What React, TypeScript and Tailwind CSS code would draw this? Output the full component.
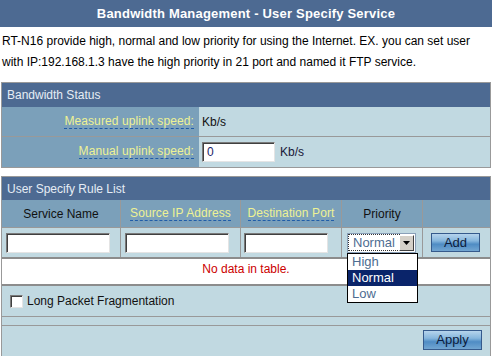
const label = 'inline-block leading-[13px] text-[#eef294] border-b border-dashed border-[#1f5ca8] tracking-[0.1px]';
const inset =
  'h-[20px] bg-white border border-t-[#7a7a7a] border-l-[#7a7a7a] border-b-[#e4e4e4] border-r-[#e4e4e4] shadow-[inset_1px_1px_0_#404040]';
const btn =
  'flex items-center justify-center h-[19px] border border-[#355a8c] text-[13px] text-[#0c1c3c] bg-[linear-gradient(#b6d4ec,#86b6dd_40%,#4f8cc4_60%,#72a6d2)]';

export default function App() {
  return (
    <div className="w-[492px] h-[357px] overflow-hidden bg-white text-[12px] text-black font-['Liberation_Sans',Arial,sans-serif]">
      {/* title */}
      <div className="h-[27px] bg-[#4d6a92] flex items-center justify-center text-white font-bold text-[13px] tracking-[0.2px]">
        Bandwidth Management - User Specify Service
      </div>

      <div className="px-[2px] pt-[4px] leading-[21px]">
        <p>RT-N16 provide high, normal and low priority for using the Internet. EX. you can set user</p>
        <p>with IP:192.168.1.3 have the high priority in 21 port and named it FTP service.</p>
      </div>

      {/* Bandwidth Status */}
      <div className="mt-[9px] ml-px w-[490px] border border-[#999]">
        <div className="h-[24px] bg-[#4d6a92] flex items-center pl-[5px] text-[#e6edf5]">Bandwidth Status</div>
        <div className="flex h-[30px] border-b border-[#999]">
          <div className="w-[197px] bg-[#7ba0ba] flex items-center justify-end pr-[5px]">
            <span className={label}>Measured uplink speed:</span>
          </div>
          <div className="flex-1 bg-[#c1d9e1] flex items-center pl-[3px] text-[#111]">Kb/s</div>
        </div>
        <div className="flex h-[30px]">
          <div className="w-[197px] bg-[#7ba0ba] flex items-center justify-end pr-[5px]">
            <span className={label}>Manual uplink speed:</span>
          </div>
          <div className="flex-1 bg-[#c1d9e1] flex items-center pl-[3px] gap-[5px] text-[#181838]">
            <div className={`${inset} w-[73px] flex items-center pl-[4px] text-[#1a2466]`}>0</div>
            <span>Kb/s</span>
          </div>
        </div>
      </div>

      {/* User Specify Rule List */}
      <div className="mt-[8px] ml-px w-[490px] border border-[#999] border-b-0">
        <div className="h-[23px] bg-[#4d6a92] flex items-center pl-[5px] text-[#e6edf5]">User Specify Rule List</div>
        <div className="flex h-[28px] bg-[#7ba0ba] border-b border-[#999]">
          <div className="w-[119px] border-r border-[#999] flex items-center justify-center text-[#111]">Service Name</div>
          <div className="w-[120px] border-r border-[#999] flex items-center justify-center">
            <span className={label}>Source IP Address</span>
          </div>
          <div className="w-[101px] border-r border-[#999] flex items-center justify-center">
            <span className={label}>Destination Port</span>
          </div>
          <div className="w-[81px] border-r border-[#999] flex items-center justify-center text-[#111]">Priority</div>
          <div className="flex-1" />
        </div>
        <div className="flex h-[31px] bg-[#c1d9e1] border-b-2 border-[#8c8c8c]">
          <div className="w-[119px] border-r border-[#999] flex items-center pl-[4px]">
            <div className={`${inset} w-[104px]`} />
          </div>
          <div className="w-[120px] border-r border-[#999] flex items-center pl-[4px]">
            <div className={`${inset} w-[104px]`} />
          </div>
          <div className="w-[101px] border-r border-[#999] flex items-center pl-[3px]">
            <div className={`${inset} w-[84px]`} />
          </div>
          <div className="w-[81px] border-r border-[#999] flex items-center pl-[5px]">
            <div className="relative w-[69px] h-[20px] bg-white border border-[#8aa0b8] flex items-center text-[13px] text-[#4d6c91]">
              <span className="ml-[1px] px-[4px] leading-[15px] outline-1 outline-dotted outline-[#333]">Normal</span>
              <div className="ml-auto mr-[1px] w-[15px] h-[16px] bg-[#d4d0c8] border border-t-white border-l-white border-b-[#404040] border-r-[#404040] flex items-center justify-center">
                <svg width="7" height="4" viewBox="0 0 7 4">
                  <path d="M0 0h7L3.5 4z" fill="#000" />
                </svg>
              </div>
              {/* open list */}
              <div className="absolute -left-px top-[19px] w-[71px] bg-white border border-black text-[13px] leading-[16px] z-10">
                <div className="pl-[4px] text-[#4d6c91]">High</div>
                <div className="pl-[4px] bg-[#0a246a] text-white">Normal</div>
                <div className="pl-[4px] text-[#4d6c91]">Low</div>
              </div>
            </div>
          </div>
          <div className="flex-1 flex items-center pl-[8px]">
            <div className={`${btn} w-[49px]`}>Add</div>
          </div>
        </div>
        <div className="h-[27px] bg-white flex justify-center pt-[3px] leading-[14px] text-[#cc0000] border-b-2 border-[#8c8c8c]">
          No data in table.
        </div>
        <div className="h-[31px] bg-[#c1d9e1] border-b border-[#999] flex items-center pl-[8px] gap-[4px]">
          <div className="w-[13px] h-[13px] bg-white border border-t-[#7a7a7a] border-l-[#7a7a7a] border-b-[#e4e4e4] border-r-[#e4e4e4] shadow-[inset_1px_1px_0_#404040]" />
          <span className="text-[#111]">Long Packet Fragmentation</span>
        </div>
        <div className="h-[9px] bg-[#c1d9e1] border-b border-[#999]" />
        <div className="h-[30px] bg-[#c1d9e1] flex justify-end items-start pt-[4px] pr-[8px]">
          <div className={`${btn} w-[59px] h-[20px]`}>Apply</div>
        </div>
      </div>
    </div>
  );
}
